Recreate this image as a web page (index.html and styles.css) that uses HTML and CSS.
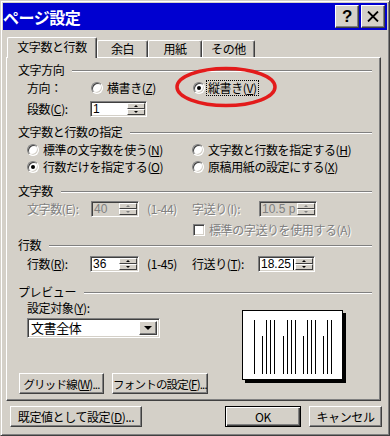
FILE: index.html
```html
<!DOCTYPE html>
<html lang="ja">
<head>
    <meta charset="UTF-8">
    <title>ページ設定</title>
    <link rel="stylesheet" href="styles.css">
</head>
<body>

<div class="dialog">
    <div class="titlebar">
        <span class="title">ページ設定</span>
        <div class="caption-btns">
            <span class="cap-btn help">?</span>
            <span class="cap-btn">
                <svg width="12" height="11" viewBox="0 0 12 11"><path d="M1 0.5 L11 10.5 M11 0.5 L1 10.5" stroke="#000" stroke-width="1.8"/></svg>
            </span>
        </div>
    </div>

    <div class="tabs">
        <span class="tab active">文字数と行数</span>
        <span class="tab w51">余白</span>
        <span class="tab w54">用紙</span>
        <span class="tab w53">その他</span>
    </div>

    <div class="panel">
        <div class="group-head"><span>文字方向</span><i class="rule"></i></div>
        <div class="row h18 mt2 indent">
            <span class="lbl w64">方向：</span>
            <span class="radio w102"><i class="dot"></i>横書き(<u>Z</u>)</span>
            <span class="radio"><i class="dot on"></i><span class="focus">縦書き(<u>V</u>)</span></span>
        </div>
        <div class="row h18 mt3 indent">
            <span class="lbl w63">段数(<u>C</u>):</span>
            <span class="spin w57"><span class="val">1</span><span class="arrows"><b class="up"></b><b class="dn"></b></span></span>
        </div>

        <div class="group-head mt7"><span>文字数と行数の指定</span><i class="rule"></i></div>
        <div class="row h17 mt2 indent">
            <span class="radio w165"><i class="dot"></i>標準の文字数を使う(<u>N</u>)</span>
            <span class="radio"><i class="dot"></i>文字数と行数を指定する(<u>H</u>)</span>
        </div>
        <div class="row h17 indent">
            <span class="radio w165"><i class="dot on"></i>行数だけを指定する(<u>O</u>)</span>
            <span class="radio"><i class="dot"></i>原稿用紙の設定にする(<u>X</u>)</span>
        </div>

        <div class="group-head mt9"><span>文字数</span><i class="rule"></i></div>
        <div class="row h18 mt2 indent disabled">
            <span class="lbl w64">文字数(E):</span>
            <span class="spin w48 off"><span class="val">40</span><span class="arrows"><b class="up"></b><b class="dn"></b></span></span>
            <span class="range">(1-44)</span>
            <span class="lbl w67">字送り(I):</span>
            <span class="spin w58 off"><span class="val">10.5 p</span><span class="arrows"><b class="up"></b><b class="dn"></b></span></span>
        </div>
        <div class="row h17 mt3 check-row disabled">
            <i class="check"></i>標準の字送りを使用する(A)
        </div>

        <div class="group-head"><span>行数</span><i class="rule"></i></div>
        <div class="row h18 mt3 indent">
            <span class="lbl w63">行数(<u>R</u>):</span>
            <span class="spin w49"><span class="val">36</span><span class="arrows"><b class="up"></b><b class="dn"></b></span></span>
            <span class="range">(1-45)</span>
            <span class="lbl w66">行送り(<u>T</u>):</span>
            <span class="spin w57"><span class="val">18.25 <i class="caret"></i></span><span class="arrows"><b class="up"></b><b class="dn"></b></span></span>
        </div>

        <div class="group-head mt12"><span>プレビュー</span><i class="rule"></i></div>
        <div class="preview">
            <div class="preview-left">
                <div class="target-lbl">設定対象(<u>Y</u>):</div>
                <div class="combo">
                    <span class="combo-val">文書全体</span>
                    <span class="combo-btn"><i class="tri"></i></span>
                </div>
                <div class="panel-btns">
                    <span class="btn narrow w85">グリッド線(<u>W</u>)...</span>
                    <span class="btn narrow w96">フォントの設定(<u>F</u>)...</span>
                </div>
            </div>
            <svg class="page" width="105" height="74" viewBox="0 0 105 74">
                <rect x="3" y="3" width="101" height="70" fill="#000"/>
                <rect x="0.5" y="0.5" width="100" height="69" fill="#fff" stroke="#000"/>
                <g stroke="#000" stroke-width="1">
                    <path d="M12.5 10 V64"/>
                    <path d="M20.5 26 V64"/>
                    <path d="M24.5 10 V64"/>
                    <path d="M28.5 10 V64"/>
                    <path d="M32.5 10 V64"/>
                    <path d="M41.5 26 V64"/>
                    <path d="M45.5 10 V64"/>
                    <path d="M49.5 10 V64"/>
                    <path d="M53.5 10 V64"/>
                    <path d="M61.5 26 V64"/>
                    <path d="M65.5 10 V64"/>
                    <path d="M69.5 10 V64"/>
                    <path d="M73.5 10 V64"/>
                    <path d="M81.5 26 V64"/>
                    <path d="M85.5 10 V64"/>
                    <path d="M89.5 10 V64"/>
                </g>
            </svg>
        </div>

        <svg class="mark" width="104" height="42" viewBox="0 0 104 42">
            <ellipse cx="52" cy="21" rx="49" ry="18.5" fill="none" stroke="#e31b1b" stroke-width="3.5"/>
        </svg>
    </div>

    <div class="footer">
        <span class="btn w132">既定値として設定(<u>D</u>)...</span>
        <span class="btn default w76">OK</span>
        <span class="btn w73">キャンセル</span>
    </div>
</div>

</body>
</html>
```

FILE: styles.css
```css
* {
    box-sizing: border-box;
}

body {
    margin: 0;
    background-color: #d4d0c8;
    color: #000;
    font-family: "Noto Sans CJK JP", "Noto Sans", sans-serif;
    font-size: 12px;
    line-height: 14px;
    letter-spacing: -0.4px;
}

u {
    text-decoration: underline;
    text-underline-offset: 1px;
}

.dialog {
    width: 390px;
    height: 436px;
    padding: 2px;
    border: 1px solid;
    border-color: #d4d0c8 #404040 #404040 #d4d0c8;
    box-shadow: inset 1px 1px #fff, inset -1px -1px #808080;
}

/* title bar */

.titlebar {
    height: 27px;
    background-color: #0000d0;
    display: flex;
    align-items: center;
    justify-content: space-between;
    padding: 0 2px 0 0;
}

.title {
    color: #fff;
    font-size: 16px;
    font-weight: bold;
    letter-spacing: -0.5px;
}

.caption-btns {
    display: flex;
    gap: 2px;
}

.cap-btn {
    width: 24px;
    height: 23px;
    display: flex;
    align-items: center;
    justify-content: center;
    background-color: #d4d0c8;
    border: 1px solid;
    border-color: #fff #404040 #404040 #fff;
    box-shadow: inset -1px -1px #808080;
}

.help {
    font-family: "Liberation Sans", sans-serif;
    font-size: 17px;
    font-weight: bold;
}

/* tabs */

.tabs {
    display: flex;
    align-items: flex-end;
    height: 21px;
    margin-top: 7px;
    padding-left: 4px;
}

.tab {
    height: 18px;
    display: flex;
    align-items: center;
    justify-content: center;
    border: 1px solid;
    border-bottom: none;
    border-color: #fff #404040 #404040 #fff;
    border-radius: 2px 2px 0 0;
    box-shadow: inset -1px 0 #808080;
    background-color: #d4d0c8;
    padding-bottom: 1px;
}

.tab.active {
    width: 90px;
    height: 21px;
    position: relative;
    z-index: 1;
    padding-bottom: 3px;
}

.w51 { width: 51px; }
.w54 { width: 54px; }
.w53 { width: 53px; }

/* panel */

.panel {
    position: relative;
    width: 375px;
    height: 344px;
    margin: -1px 0 0 3px;
    padding: 5px 8px 0 11px;
    border: 1px solid;
    border-color: #fff #404040 #404040 #fff;
    box-shadow: inset -1px -1px #808080;
}

.group-head {
    display: flex;
    align-items: center;
    height: 14px;
}

.rule {
    flex: 1;
    margin: 2px 0 0 8px;
    border-top: 1px solid #808080;
    border-bottom: 1px solid #fff;
}

.row {
    display: flex;
    align-items: center;
    white-space: nowrap;
}

.h18 { height: 18px; }
.h17 { height: 17px; }
.mt2 { margin-top: 2px; }
.mt3 { margin-top: 3px; }
.mt7 { margin-top: 7px; }
.mt9 { margin-top: 9px; }
.mt12 { margin-top: 12px; }

.indent {
    padding-left: 9px;
}

.lbl {
    display: inline-block;
}

.w63 { width: 63px; }
.w64 { width: 64px; }
.w66 { width: 66px; }
.w67 { width: 67px; }
.w102 { width: 102px; }
.w165 { width: 165px; }

.disabled {
    color: #808080;
    text-shadow: 1px 1px #fff;
}

.range {
    display: inline-block;
    width: 45px;
    margin-left: 8px;
}

/* radio & checkbox */

.radio {
    display: inline-flex;
    align-items: center;
}

.dot {
    width: 12px;
    height: 12px;
    margin-right: 4px;
    border-radius: 50%;
    background-color: #fff;
    border: 1px solid;
    border-color: #808080 #fff #fff #808080;
    box-shadow: inset 1px 1px #404040, inset -1px -1px #d4d0c8;
    position: relative;
}

.dot.on::after {
    content: "";
    position: absolute;
    left: 3px;
    top: 3px;
    width: 4px;
    height: 4px;
    border-radius: 50%;
    background-color: #000;
}

.focus {
    outline: 1px dotted #000;
    outline-offset: 0;
    padding: 0 1px;
    margin-left: -2px;
}

.check-row {
    padding-left: 175px;
}

.check {
    width: 12px;
    height: 12px;
    margin-right: 4px;
    background-color: #fff;
    border: 1px solid;
    border-color: #808080 #fff #fff #808080;
    box-shadow: inset 1px 1px #404040, inset -1px -1px #d4d0c8;
}

/* spin boxes */

.spin {
    display: inline-flex;
    height: 16px;
    padding: 1px;
    background-color: #fff;
    border: 1px solid;
    border-color: #808080 #fff #fff #808080;
    box-shadow: inset 1px 1px #404040, inset -1px -1px #d4d0c8;
    color: #000;
    text-shadow: none;
}

.spin.off {
    background-color: #d4d0c8;
    color: #808080;
}

.w48 { width: 48px; }
.w49 { width: 49px; }
.w57 { width: 57px; }
.w58 { width: 58px; }

.val {
    flex: 1;
    padding-left: 1px;
    font-family: "Liberation Sans", sans-serif;
    font-size: 12px;
    line-height: 12px;
    letter-spacing: 0;
    white-space: nowrap;
    overflow: hidden;
    position: relative;
}

.caret {
    position: absolute;
    left: 33px;
    top: 1px;
    width: 1px;
    height: 11px;
    background-color: #000;
}

.arrows {
    width: 18px;
    flex: none;
    display: flex;
    flex-direction: column;
}

.arrows b {
    flex: 1;
    display: flex;
    align-items: center;
    justify-content: center;
    background-color: #d4d0c8;
    border: 1px solid;
    border-color: #fff #404040 #404040 #fff;
}

.arrows b::after {
    content: "";
    border-left: 2px solid transparent;
    border-right: 2px solid transparent;
}

.arrows .up::after {
    border-bottom: 2px solid #000;
}

.arrows .dn::after {
    border-top: 2px solid #000;
}

.off .arrows b::after {
    border-top-color: #808080;
    border-bottom-color: #808080;
}

/* preview */

.preview {
    display: flex;
}

.preview-left {
    width: 224px;
    padding-left: 9px;
}

.target-lbl {
    margin-top: 2px;
    height: 14px;
}

.combo {
    display: flex;
    width: 133px;
    height: 20px;
    margin-top: 3px;
    padding: 2px;
    background-color: #fff;
    border: 1px solid;
    border-color: #808080 #fff #fff #808080;
    box-shadow: inset 1px 1px #404040, inset -1px -1px #d4d0c8;
}

.combo-val {
    flex: 1;
    font-size: 13px;
    line-height: 14px;
    padding-left: 1px;
}

.combo-btn {
    width: 18px;
    display: flex;
    align-items: center;
    justify-content: center;
    background-color: #d4d0c8;
    border: 1px solid;
    border-color: #fff #404040 #404040 #fff;
    box-shadow: inset -1px -1px #808080;
}

.tri {
    border-left: 4px solid transparent;
    border-right: 4px solid transparent;
    border-top: 4px solid #000;
}

.page {
    display: block;
    margin-top: 11px;
}

.panel-btns {
    display: flex;
    gap: 8px;
    margin: 35px 0 0 -8px;
}

/* buttons */

.btn {
    height: 21px;
    display: flex;
    align-items: center;
    justify-content: center;
    white-space: nowrap;
    background-color: #d4d0c8;
    border: 1px solid;
    border-color: #fff #404040 #404040 #fff;
    box-shadow: inset -1px -1px #808080;
}

.btn.narrow {
    font-size: 11.5px;
    letter-spacing: -0.8px;
}

.btn.default {
    border-color: #000;
    box-shadow: inset 1px 1px #fff, inset -1px -1px #404040, inset -2px -2px #808080;
}

.w73 { width: 73px; }
.w76 { width: 76px; }
.w85 { width: 85px; }
.w96 { width: 96px; }
.w132 { width: 132px; }

.footer {
    display: flex;
    gap: 8px;
    margin-top: 5px;
    padding: 0 5px 0 7px;
}

.footer .default {
    margin-left: auto;
}

.mark {
    position: absolute;
    left: 167px;
    top: 8px;
}
```
